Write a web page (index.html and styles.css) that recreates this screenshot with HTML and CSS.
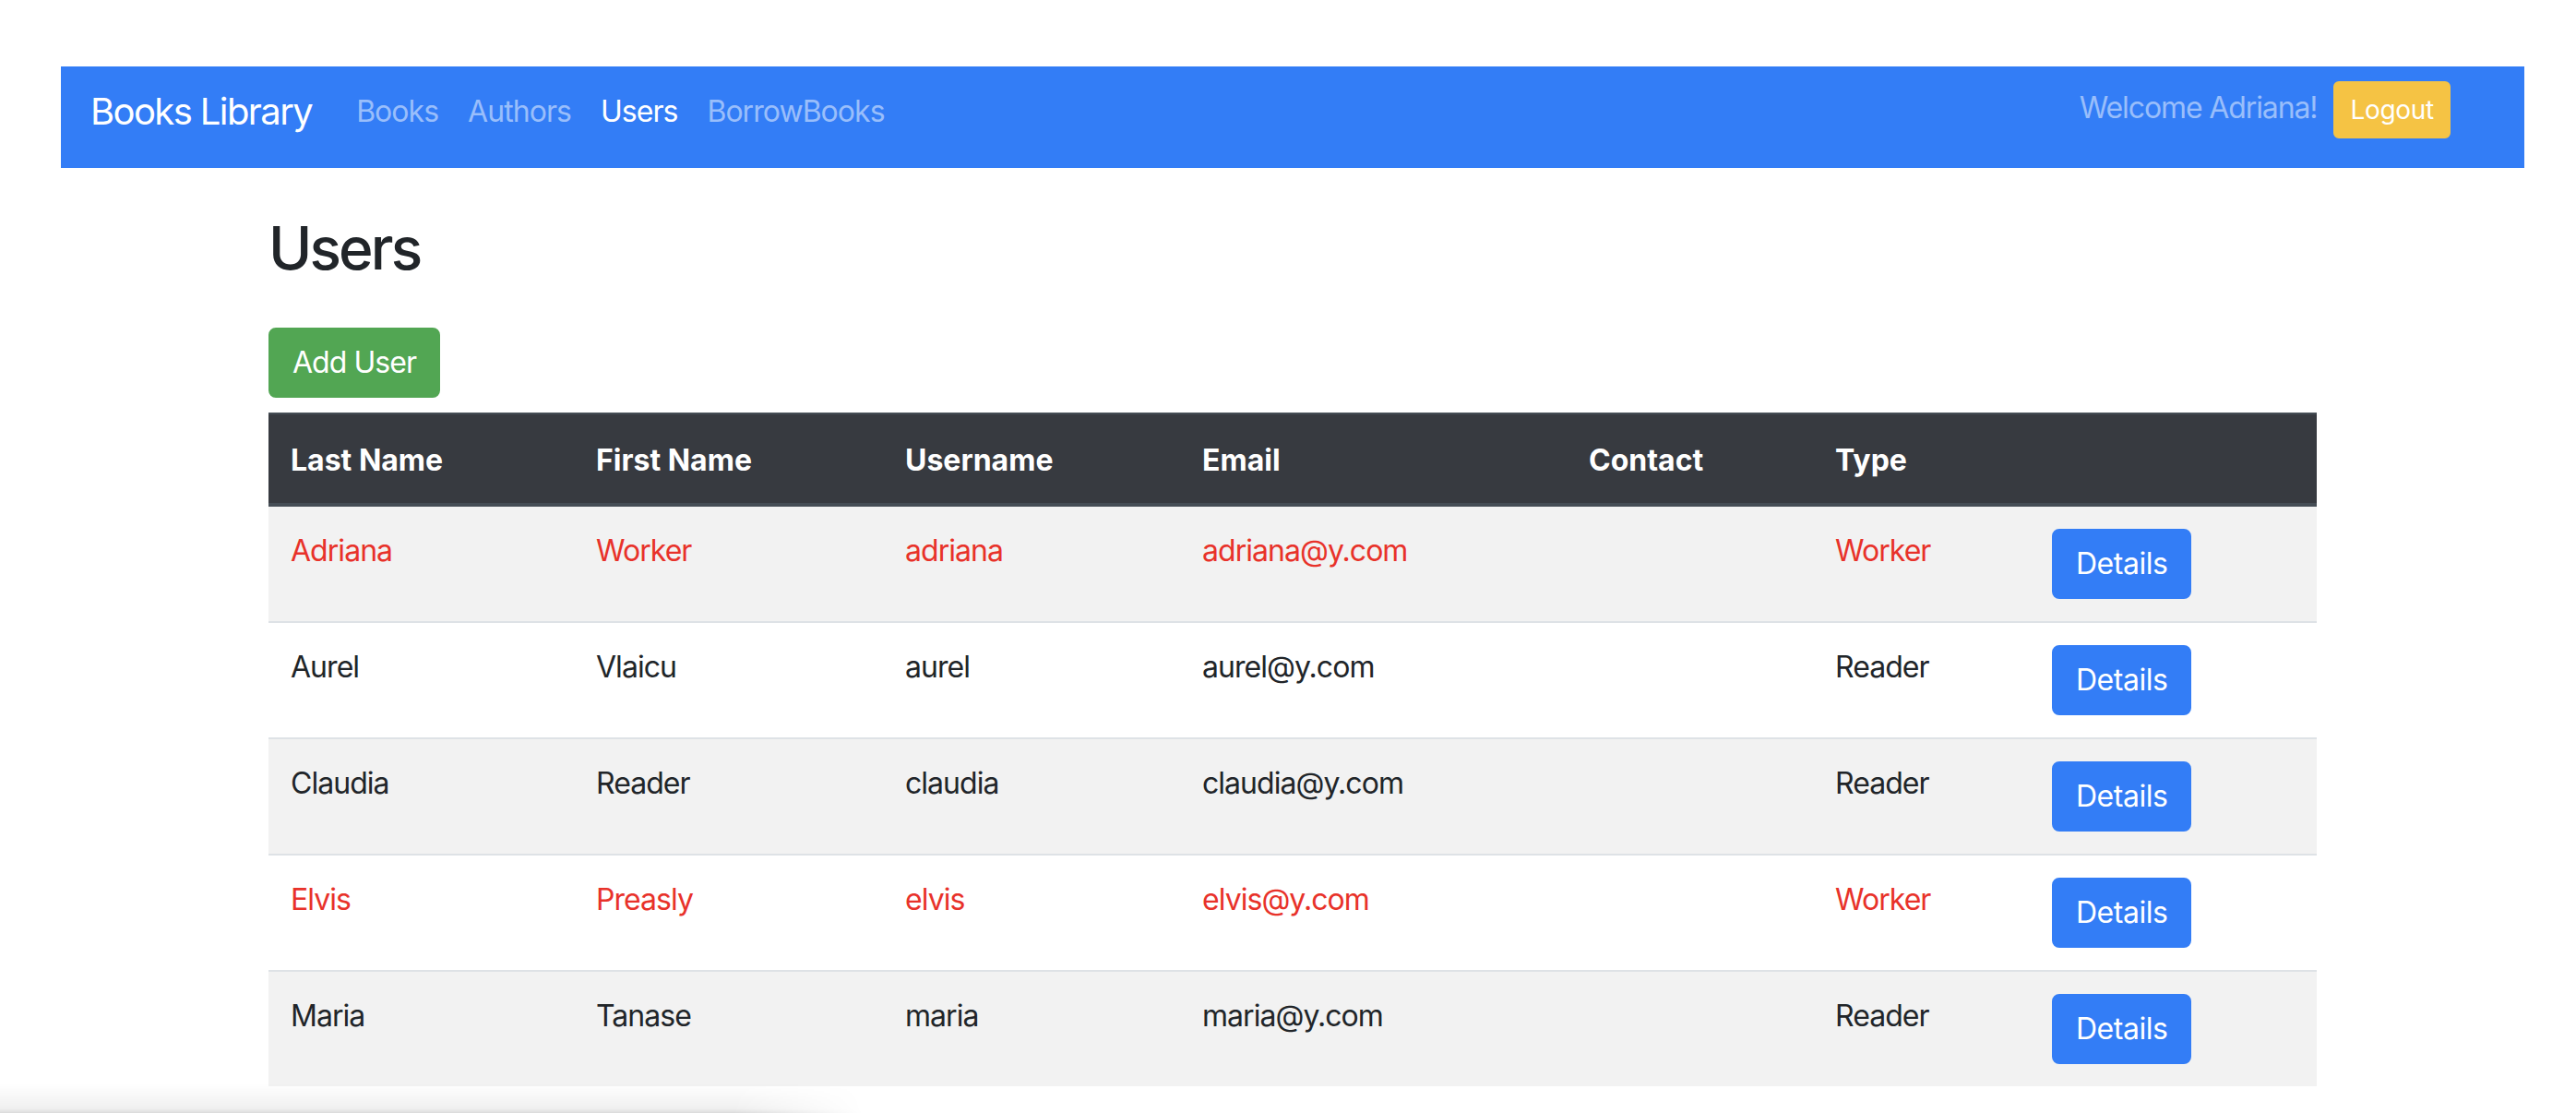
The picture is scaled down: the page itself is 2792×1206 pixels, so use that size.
FILE: index.html
```html
<!DOCTYPE html>
<html lang="en">
<head>
<meta charset="utf-8">
<title>Users - Books Library</title>
<link rel="stylesheet" href="styles.css">
</head>
<body>
<div class="page">
  <nav class="navbar">
    <a class="brand" href="#">Books Library</a>
    <ul class="nav">
      <li><a class="nav-link" href="#">Books</a></li>
      <li><a class="nav-link" href="#">Authors</a></li>
      <li><a class="nav-link active" href="#">Users</a></li>
      <li><a class="nav-link" href="#">BorrowBooks</a></li>
    </ul>
    <div class="nav-right">
      <span class="welcome">Welcome Adriana!</span>
      <button class="btn btn-logout">Logout</button>
    </div>
  </nav>

  <main class="container">
    <h2 class="title">Users</h2>
    <button class="btn btn-add">Add User</button>
    <table class="users">
      <colgroup>
        <col class="c1"><col class="c2"><col class="c3"><col class="c4"><col class="c5"><col class="c6"><col class="c7">
      </colgroup>
      <thead>
        <tr>
          <th>Last Name</th>
          <th>First Name</th>
          <th>Username</th>
          <th>Email</th>
          <th>Contact</th>
          <th>Type</th>
          <th></th>
        </tr>
      </thead>
      <tbody>
        <tr class="worker striped">
          <td>Adriana</td><td>Worker</td><td>adriana</td><td>adriana@y.com</td><td></td><td>Worker</td>
          <td><button class="btn btn-details">Details</button></td>
        </tr>
        <tr>
          <td>Aurel</td><td>Vlaicu</td><td>aurel</td><td>aurel@y.com</td><td></td><td>Reader</td>
          <td><button class="btn btn-details">Details</button></td>
        </tr>
        <tr class="striped">
          <td>Claudia</td><td>Reader</td><td>claudia</td><td>claudia@y.com</td><td></td><td>Reader</td>
          <td><button class="btn btn-details">Details</button></td>
        </tr>
        <tr class="worker">
          <td>Elvis</td><td>Preasly</td><td>elvis</td><td>elvis@y.com</td><td></td><td>Worker</td>
          <td><button class="btn btn-details">Details</button></td>
        </tr>
        <tr class="striped">
          <td>Maria</td><td>Tanase</td><td>maria</td><td>maria@y.com</td><td></td><td>Reader</td>
          <td><button class="btn btn-details">Details</button></td>
        </tr>
      </tbody>
    </table>
  </main>
  <div class="bottom-shade"></div>
</div>
</body>
</html>
```

FILE: styles.css
```css
* { box-sizing: border-box; }

html, body {
  margin: 0;
  padding: 0;
  background: #ffffff;
}

body {
  font-family: Inter, "Noto Sans", "Liberation Sans", sans-serif;
  font-size: 32px;
  line-height: 1.5;
  color: #212529;
  overflow: hidden;
}

.page {
  padding-top: 72px;
  height: 1206px;
  position: relative;
}

/* Navbar */
.navbar {
  display: flex;
  align-items: center;
  margin-left: 66px;
  width: 2670px;
  height: 110px;
  padding: 0 80px 0 32px;
  background: #337df6;
}

.brand {
  font-size: 40px;
  line-height: 60px;
  color: #ffffff;
  text-decoration: none;
  margin-right: 32px;
  margin-top: -12px;
  letter-spacing: -0.04em;
}

.nav {
  display: flex;
  list-style: none;
  margin: -12px 0 0;
  padding: 0;
}

.nav-link {
  display: block;
  padding: 8px 16px;
  line-height: 48px;
  color: #99befb;
  text-decoration: none;
  letter-spacing: -0.03em;
}

.nav-link.active {
  color: #ffffff;
}

.nav-right {
  margin-left: auto;
  display: flex;
  align-items: center;
  gap: 18px;
  margin-top: -16px;
}

.welcome {
  color: #99befb;
  letter-spacing: -0.035em;
  margin-top: -4px;
}

.btn {
  font-family: inherit;
  border: 2px solid transparent;
  color: #ffffff;
  cursor: pointer;
  letter-spacing: -0.03em;
}

.btn-logout {
  background: #f5c344;
  border-color: #f5c344;
  font-size: 28px;
  line-height: 42px;
  padding: 8px 16px;
  border-radius: 6px;
  letter-spacing: -0.01em;
}

/* Content */
.container {
  margin-left: 291px;
  width: 2220px;
}

.title {
  margin: 48px 0 48px;
  font-size: 64px;
  font-weight: 500;
  line-height: 77px;
  color: #212529;
  letter-spacing: -0.045em;
}

.btn-add {
  display: block;
  background: #52a653;
  border-color: #52a653;
  font-size: 32px;
  line-height: 48px;
  padding: 12px 24px;
  border-radius: 8px;
  height: 76px;
  margin-bottom: 16px;
}

.users {
  width: 2220px;
  border-collapse: collapse;
  table-layout: fixed;
}

.c1 { width: 331px; }
.c2 { width: 335px; }
.c3 { width: 322px; }
.c4 { width: 419px; }
.c5 { width: 267px; }
.c6 { width: 235px; }
.c7 { width: 311px; }

.users th {
  background: #373a40;
  color: #ffffff;
  font-weight: 700;
  text-align: left;
  padding: 26px 24px 22px;
  line-height: 48px;
  border-top: 2px solid #454d55;
  border-bottom: 4px solid #454d55;
}

.users td {
  padding: 24px;
  line-height: 48px;
  vertical-align: top;
  border-top: 2px solid #dee2e6;
  height: 124px;
  letter-spacing: -0.03em;
}

.users tbody tr:first-child td {
  border-top: none;
}

.users tr.striped td {
  background: #f2f2f2;
}

.users tr.worker td {
  color: #e8322a;
}

.btn-details {
  display: block;
  background: #337df6;
  border-color: #337df6;
  font-size: 32px;
  line-height: 48px;
  padding: 12px 24px;
  height: 76px;
  border-radius: 8px;
  color: #ffffff !important;
  letter-spacing: -0.015em;
}

.bottom-shade {
  position: absolute;
  left: 0;
  bottom: 0;
  width: 935px;
  height: 32px;
  background: linear-gradient(to bottom, rgba(0,0,0,0) 0%, rgba(0,0,0,0.06) 85%, rgba(0,0,0,0.14) 100%);
  -webkit-mask-image: linear-gradient(to right, #000 85%, transparent 100%);
  mask-image: linear-gradient(to right, #000 85%, transparent 100%);
}
```
